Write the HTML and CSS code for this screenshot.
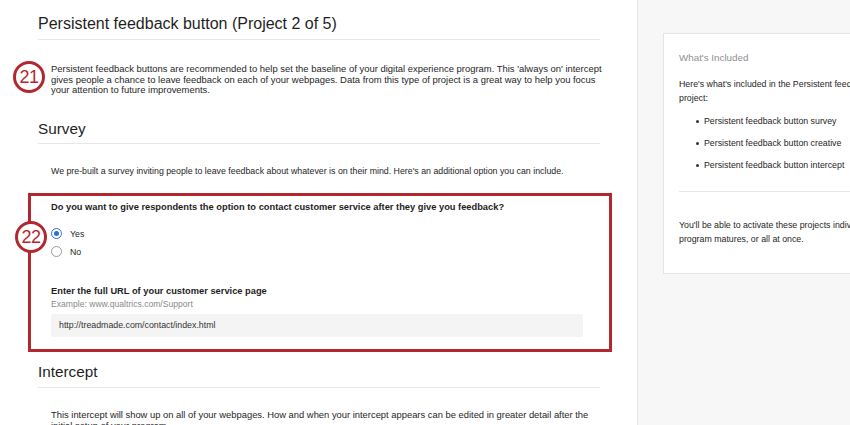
FILE: index.html
```html
<!DOCTYPE html>
<html>
<head>
<meta charset="utf-8">
<link rel="stylesheet" href="styles.css">
</head>
<body>
<div class="page">
  <div class="main">
    <h1 class="title">Persistent feedback button (Project 2 of 5)</h1>
    <p class="intro">Persistent feedback buttons are recommended to help set the baseline of your digital experience program. This 'always on' intercept<br>gives people a chance to leave feedback on each of your webpages. Data from this type of project is a great way to help you focus<br>your attention to future improvements.</p>
    <h2 class="section">Survey</h2>
    <p class="text">We pre-built a survey inviting people to leave feedback about whatever is on their mind. Here's an additional option you can include.</p>
    <div class="highlight">
      <div class="question">Do you want to give respondents the option to contact customer service after they give you feedback?</div>
      <div class="radios">
        <label class="radio"><span class="dot checked"></span>Yes</label>
        <label class="radio"><span class="dot"></span>No</label>
      </div>
      <div class="field-label">Enter the full URL of your customer service page</div>
      <div class="field-hint">Example: www.qualtrics.com/Support</div>
      <div class="input">http://treadmade.com/contact/index.html</div>
    </div>
    <h2 class="section section-intercept">Intercept</h2>
    <p class="text text-intercept">This intercept will show up on all of your webpages. How and when your intercept appears can be edited in greater detail after the<br>initial setup of your program.</p>
  </div>
  <div class="side">
    <div class="card">
      <div class="card-title">What's Included</div>
      <p class="card-text">Here's what's included in the Persistent feedback button<br>project:</p>
      <ul class="card-list">
        <li>Persistent feedback button survey</li>
        <li>Persistent feedback button creative</li>
        <li>Persistent feedback button intercept</li>
      </ul>
      <div class="card-divider"></div>
      <p class="card-text card-foot">You'll be able to activate these projects individually as your<br>program matures, or all at once.</p>
    </div>
  </div>
</div>
<div class="badge badge-21">21</div>
<div class="badge badge-22">22</div>
</body>
</html>
```
FILE: styles.css
```css
html, body {
  margin: 0;
  padding: 0;
  width: 850px;
  height: 425px;
  overflow: hidden;
  background: #fff;
  font-family: "Liberation Sans", Arial, sans-serif;
  color: #262626;
}
.page {
  display: flex;
  width: 850px;
  height: 425px;
}
.main {
  width: 562px;
  flex: 0 0 562px;
  padding: 0 37px 0 38px;
}
.title {
  margin: 0;
  padding-top: 15px;
  height: 24px;
  font-size: 16px;
  font-weight: normal;
  color: #1f1f1f;
  border-bottom: 1px solid #e6e6e6;
}
.intro {
  margin: 24px -4px 0 13px;
  font-size: 9.45px;
  line-height: 10.7px;
  white-space: nowrap;
}
.section {
  margin: 24px 0 0 0;
  height: 23px;
  font-size: 15.3px;
  line-height: 17.5px;
  font-weight: normal;
  color: #1f1f1f;
  border-bottom: 1px solid #e6e6e6;
}
.text {
  margin: 22px 0 0 13px;
  font-size: 8.8px;
  line-height: 11px;
}
.highlight {
  margin: 16px -12px 0 -10px;
  height: 153px;
  border: 3px solid #b3272f;
  padding: 0 0 0 20px;
}
.question {
  margin-top: 6px;
  font-size: 9.3px;
  line-height: 11px;
  font-weight: bold;
  color: #1e1e1e;
}
.radios {
  margin-top: 15px;
  display: flex;
  flex-direction: column;
  gap: 7px;
}
.radio {
  display: flex;
  align-items: center;
  font-size: 8.8px;
  height: 11px;
}
.dot {
  width: 9px;
  height: 9px;
  border: 1px solid #9a9a9a;
  border-radius: 50%;
  margin: 0 8px 0 0;
  box-sizing: content-box;
  position: relative;
}
.dot.checked {
  border-color: #2f6fd6;
}
.dot.checked::after {
  content: "";
  position: absolute;
  left: 2px;
  top: 2px;
  width: 5px;
  height: 5px;
  border-radius: 50%;
  background: #2f6fd6;
}
.field-label {
  margin-top: 29px;
  font-size: 9.3px;
  line-height: 11px;
  font-weight: bold;
  color: #1e1e1e;
}
.field-hint {
  margin-top: 2px;
  font-size: 8.6px;
  line-height: 10px;
  color: #8a8a8a;
}
.input {
  margin-top: 5px;
  width: 524px;
  height: 23px;
  line-height: 23px;
  padding-left: 8px;
  background: #f4f4f4;
  border-radius: 2px;
  font-size: 8.8px;
  color: #333;
}
.section-intercept {
  margin-top: 11px;
  height: 24px;
}
.text-intercept {
  margin-top: 21px;
  margin-right: -10px;
  font-size: 9.4px;
  white-space: nowrap;
}
.side {
  flex: 1;
  background: #f7f7f7;
  border-left: 1px solid #e6e6e6;
  padding: 33px 0 0 25px;
  overflow: hidden;
}
.card {
  width: 240px;
  background: #fff;
  border: 1px solid #e4e4e4;
  border-right: none;
  padding: 18px 0 27px 15px;
  font-size: 8.8px;
  white-space: nowrap;
}
.card-title {
  color: #8f8f8f;
  font-size: 9.8px;
  line-height: 12px;
}
.card-text {
  margin: 14px 0 0 0;
  line-height: 13.6px;
}
.card-list {
  margin: 10px 0 0 0;
  padding-left: 25px;
  list-style: none;
  display: flex;
  flex-direction: column;
  gap: 10px;
}
.card-list li {
  position: relative;
  line-height: 12px;
}
.card-list li::before {
  content: "";
  position: absolute;
  left: -8px;
  top: 5px;
  width: 3px;
  height: 3px;
  border-radius: 50%;
  background: #333;
}
.card-divider {
  margin-top: 20px;
  height: 1px;
  background: #e6e6e6;
}
.card-foot {
  margin-top: 26px;
  line-height: 14px;
}
.badge {
  position: absolute;
  width: 26px;
  height: 26px;
  border: 3px solid #b3272f;
  border-radius: 50%;
  background: #fff;
  color: #b3272f;
  font-size: 18px;
  line-height: 26px;
  text-align: center;
  letter-spacing: -0.5px;
}
.badge-21 {
  left: 13px;
  top: 61px;
}
.badge-22 {
  left: 15px;
  top: 221px;
}
```
